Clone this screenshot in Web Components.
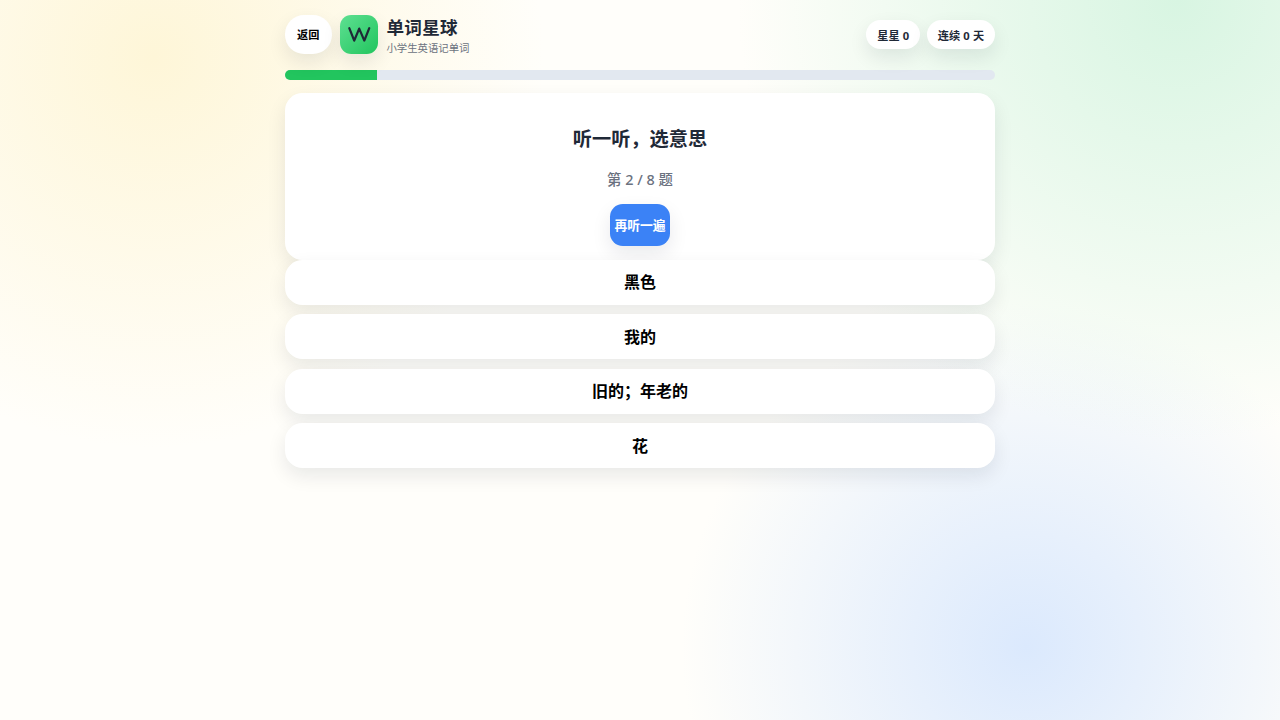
<!DOCTYPE html>
<html lang="zh-CN">
<head>
<meta charset="utf-8">
<title>单词星球</title>
<style>
  body {
    margin: 0;
    min-height: 100vh;
    color: #1f2937;
    font-family: "Noto Sans", "Noto Sans CJK SC", sans-serif;
    background:
      radial-gradient(circle at 12% 8%, #fef6d8 0%, rgba(254, 246, 216, 0) 390px),
      radial-gradient(circle at 92% 0%, #d8f5e2 0%, rgba(216, 245, 226, 0) 440px),
      radial-gradient(circle at 80.2% 90%, #dbe9fd 0%, rgba(219, 233, 253, 0) 345px),
      #fffefa;
  }
</style>
</head>
<body>
<quiz-page></quiz-page>
<script>
const SHADOW = '0 8px 19.2px rgba(15, 23, 42, .09)';

class BaseElement extends HTMLElement {
  constructor() {
    super();
    this.attachShadow({ mode: 'open' });
  }

  connectedCallback() {
    this.shadowRoot.innerHTML = this.render();
  }
}

class BackButton extends BaseElement {
  render() {
    return `<style>
      :host { display: block; }
      button { width: 47px; height: 38.4px; padding: 0; border: 0; border-radius: 19.2px; background: #fff; color: #000; font: 700 11.2px/1 "Noto Sans", "Noto Sans CJK SC", sans-serif; box-shadow: ${SHADOW}; }
    </style><button><slot></slot></button>`;
  }
}

class BrandLogo extends BaseElement {
  render() {
    return `<style>
      :host { display: flex; align-items: center; gap: 8px; }
      .mark { width: 38.4px; height: 38.4px; border-radius: 11.2px; background: linear-gradient(135deg, #5ee092, #22c55e); box-shadow: ${SHADOW}; }
      svg { display: block; width: 100%; height: 100%; }
      .name { font-size: 17.6px; font-weight: 700; line-height: 24px; letter-spacing: .3px; }
      .sub { font-size: 10.4px; line-height: 16px; color: #6b7280; margin-top: 1px; }
      .text { padding-top: 1.6px; }
    </style>
    <div class="mark"><svg viewBox="0 0 48 48"><path d="M11.600 16.500L17.800 32L24 17L30.400 32L36.600 16.500" fill="none" stroke="#1f2937" stroke-width="2.8" stroke-linecap="round" stroke-linejoin="round"/></svg></div>
    <div class="text"><div class="name"><slot></slot></div><div class="sub"><slot name="sub"></slot></div></div>`;
  }
}

class StatPill extends BaseElement {
  render() {
    return `<style>
      :host { display: block; box-sizing: border-box; height: 29.6px; padding: 0 11px; border-radius: 15px; background: #fff; font-size: 11.2px; font-weight: 700; line-height: 31px; letter-spacing: .12px; white-space: nowrap; box-shadow: ${SHADOW}; }
    </style><slot></slot>`;
  }
}

class ProgressBar extends BaseElement {
  render() {
    const percent = Number(this.getAttribute('value')) || 0;
    return `<style>
      :host { display: block; height: 9.6px; border-radius: 99px; overflow: hidden; background: #e2e8f0; }
      .fill { width: ${percent}%; height: 100%; background: #22c55e; }
    </style><div class="fill"></div>`;
  }
}

class QuestionCard extends BaseElement {
  render() {
    return `<style>
      :host { display: flex; flex-direction: column; align-items: center; box-sizing: border-box; height: 166.4px; padding-top: 30.8px; border-radius: 17.6px; background: #fff; box-shadow: ${SHADOW}; }
      h2 { margin: 0; font-size: 19.2px; line-height: 29px; font-weight: 700; }
      .step { margin-top: 15.6px; font-size: 14.4px; line-height: 22px; font-weight: 500; color: #6b7280; }
      button { margin-top: 13.6px; width: 60.8px; height: 41.6px; padding: 0; border: 0; border-radius: 12.8px; background: #3b82f6; color: #fff; font: 700 12.8px/1 "Noto Sans", "Noto Sans CJK SC", sans-serif; white-space: nowrap; box-shadow: ${SHADOW}; }
    </style>
    <h2><slot></slot></h2>
    <div class="step"><slot name="step"></slot></div>
    <button><slot name="action"></slot></button>`;
  }
}

class AnswerOption extends BaseElement {
  render() {
    return `<style>
      :host { display: block; }
      button { display: block; width: 100%; height: 44.8px; padding: 0; border: 0; border-radius: 17.6px; background: #fff; color: #000; font: 700 16px/1 "Noto Sans", "Noto Sans CJK SC", sans-serif; box-shadow: ${SHADOW}; }
    </style><button><slot></slot></button>`;
  }
}

class QuizPage extends BaseElement {
  render() {
    const answers = ['黑色', '我的', '旧的；年老的', '花'];
    return `<style>
      :host { display: block; width: 710.4px; margin: 0 auto; padding-top: 14.6px; }
      header { display: flex; align-items: center; height: 40px; }
      brand-logo { margin-left: 8.2px; }
      .stats { display: flex; gap: 6.4px; margin-left: auto; }
      progress-bar { margin: 15.8px 0 13.2px; }
      .answers { display: grid; gap: 9.6px; margin-top: .4px; }
    </style>
    <header>
      <back-button>返回</back-button>
      <brand-logo>单词星球<span slot="sub">小学生英语记单词</span></brand-logo>
      <div class="stats"><stat-pill>星星 0</stat-pill><stat-pill>连续 0 天</stat-pill></div>
    </header>
    <progress-bar value="13"></progress-bar>
    <question-card>听一听，选意思<span slot="step">第 2 / 8 题</span><span slot="action">再听一遍</span></question-card>
    <div class="answers">${answers.map((text) => `<answer-option>${text}</answer-option>`).join('')}</div>`;
  }
}

customElements.define('back-button', BackButton);
customElements.define('brand-logo', BrandLogo);
customElements.define('stat-pill', StatPill);
customElements.define('progress-bar', ProgressBar);
customElements.define('question-card', QuestionCard);
customElements.define('answer-option', AnswerOption);
customElements.define('quiz-page', QuizPage);
</script>
</body>
</html>
